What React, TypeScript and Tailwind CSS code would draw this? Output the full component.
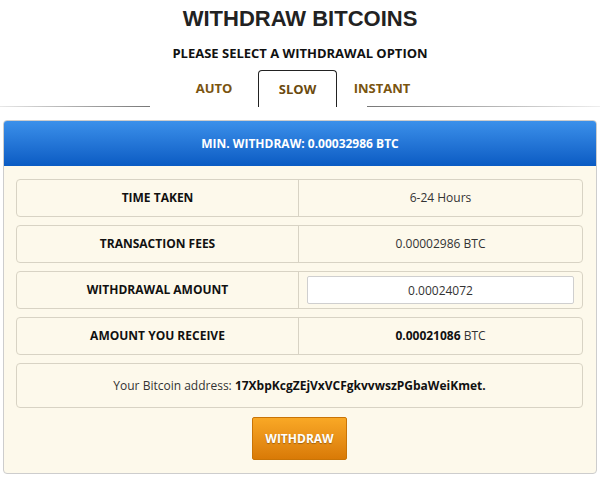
import React from "react";

const rows = [
  { label: "TIME TAKEN", value: <span>6-24 Hours</span> },
  { label: "TRANSACTION FEES", value: <span>0.00002986 BTC</span> },
  {
    label: "WITHDRAWAL AMOUNT",
    value: (
      <input
        readOnly
        value="0.00024072"
        className="w-full h-[28px] bg-white border border-[#cfcfcf] rounded-[2px] text-center text-[12px] text-[#333] outline-none"
      />
    ),
  },
  {
    label: "AMOUNT YOU RECEIVE",
    value: (
      <span>
        <b className="text-[#111]">0.00021086</b> BTC
      </span>
    ),
  },
];

const App = () => {
  return (
    <div className="w-[600px] h-[480px] bg-white overflow-hidden font-['Open_Sans',sans-serif]">
      {/* Title */}
      <h1 className="pt-[6px] text-center text-[22px] leading-[26px] font-bold text-[#222] font-['Liberation_Sans',Arial,sans-serif]">
        WITHDRAW BITCOINS
      </h1>
      <p className="mt-[12px] text-center text-[13px] leading-[18px] font-bold text-[#111]">
        PLEASE SELECT A WITHDRAWAL OPTION
      </p>

      {/* Tabs */}
      <div className="mt-[8px] flex items-end h-[37px]">
        <div className="w-[150px] h-px bg-gradient-to-r from-[#e8e8e8] to-[#777]" />
        <div className="w-[217px] shrink-0 flex items-end h-full">
          <div className="ml-[22px] w-[84px] shrink-0 h-full flex items-center justify-center text-[13px] font-bold text-[#7a5410]">
            AUTO
          </div>
          <div className="ml-[2px] w-[79px] shrink-0 h-full border border-b-0 border-[#222] rounded-t-[4px] flex items-center justify-center pt-[2px] text-[13px] font-bold text-[#6b4a0e]">
            SLOW
          </div>
          <div className="w-[90px] shrink-0 h-full flex items-center justify-center text-[13px] font-bold text-[#7a5410]">
            INSTANT
          </div>
        </div>
        <div className="flex-1 h-px bg-gradient-to-r from-[#777] to-[#eeeeee]" />
      </div>

      {/* Panel */}
      <div className="mt-[13px] mx-[3px] w-[594px] border border-[#cdcdcd] rounded-[4px] overflow-hidden bg-[#fdf9eb]">
        <div className="h-[45px] bg-gradient-to-b from-[#3b90ea] to-[#0a5bc3] flex items-center justify-center text-white text-[12px] font-bold">
          MIN. WITHDRAW: 0.00032986 BTC
        </div>
        <div className="pt-[13px] pb-[13px] pl-[12px] pr-[13px] flex flex-col gap-[8px]">
          {rows.map((r) => (
            <div
              key={r.label}
              className="h-[38px] border border-[#d8d3c4] rounded-[4px] flex text-[12px] text-[#333]"
            >
              <div className="w-[282px] shrink-0 border-r border-[#d8d3c4] flex items-center justify-center font-bold text-[#111]">
                {r.label}
              </div>
              <div className="flex-1 flex items-center justify-center px-[8px]">{r.value}</div>
            </div>
          ))}
          <div className="h-[45px] border border-[#d8d3c4] rounded-[4px] flex items-center justify-center text-[12px] text-[#333]">
            <span>
              Your Bitcoin address: <b className="text-[#111]">17XbpKcgZEjVxVCFgkvvwszPGbaWeiKmet.</b>
            </span>
          </div>
          <div className="flex justify-center mt-[1px]">
            <button className="w-[95px] h-[43px] border border-[#c97406] rounded-[2px] bg-gradient-to-b from-[#f9a825] to-[#d97a06] text-white text-[12px] font-bold [text-shadow:0_1px_1px_rgba(0,0,0,0.3)]">
              WITHDRAW
            </button>
          </div>
        </div>
      </div>
    </div>
  );
};

export default App;
